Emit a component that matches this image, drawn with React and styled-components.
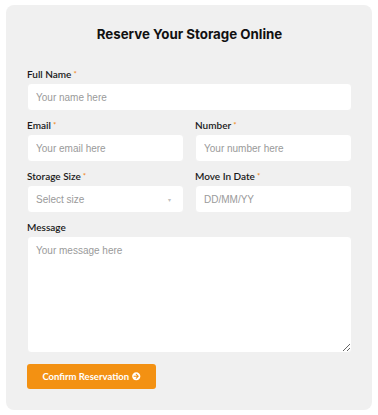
import React from 'react';
import styled, { createGlobalStyle } from 'styled-components';
import { FaArrowCircleRight } from 'react-icons/fa';

const GlobalStyle = createGlobalStyle`
  body {
    margin: 0;
    background: #ffffff;
    font-family: "Lato", "Liberation Sans", sans-serif;
  }
`;

const Page = styled.div`
  padding: 5px 6px 5px 6px;
`;

const Card = styled.form`
  background: #f0f0f0;
  border-radius: 8px;
  padding: 21px 20px 21px 21px;
  display: flex;
  flex-direction: column;
  gap: 8px;
`;

const Title = styled.h2`
  margin: 0 0 17px;
  text-align: center;
  font-family: "Inter", "Liberation Sans", sans-serif;
  font-size: 13.3px;
  font-weight: 700;
  line-height: 17px;
  color: #111;
`;

const Row = styled.div`
  display: grid;
  grid-template-columns: 1fr 1fr;
  gap: 11px;
`;

const Field = styled.div`
  display: flex;
  flex-direction: column;
  gap: 3px;
`;

const Label = styled.label`
  font-size: 10px;
  font-weight: 600;
  line-height: 12px;
  color: #1a1a1a;

  span {
    color: #f08a24;
    font-size: 8px;
    vertical-align: top;
    margin-left: 2px;
  }
`;

const inputBase = `
  box-sizing: border-box;
  width: 100%;
  border: 1px solid #f0f0f0;
  border-radius: 4px;
  background: #fff;
  font-family: "Liberation Sans", Arial, sans-serif;
  font-size: 10px;
  color: #333;
  padding: 0 8px;
  outline: none;

  &::placeholder {
    color: #9a9a9a;
  }
`;

const Input = styled.input`
  ${inputBase}
  height: 28px;
`;

const SelectBox = styled.div`
  ${inputBase}
  height: 28px;
  display: flex;
  align-items: center;
  justify-content: space-between;
  color: #9a9a9a;

  i {
    font-style: normal;
    font-size: 6px;
    color: #c0c0c0;
    margin-right: 4px;
  }
`;

const TextArea = styled.textarea`
  ${inputBase}
  height: 117px;
  padding: 8px;
  resize: vertical;
  display: block;
`;

const Button = styled.button`
  align-self: flex-start;
  margin-top: 3px;
  width: 129px;
  height: 25px;
  border: none;
  border-radius: 3px;
  background: #f39112;
  color: #fff;
  font-family: "Lato", "Liberation Sans", sans-serif;
  font-size: 9.5px;
  font-weight: 700;
  display: flex;
  align-items: center;
  justify-content: center;
  gap: 3px;

  svg {
    font-size: 8.5px;
  }
`;

const Req = () => <span>*</span>;

export default function App() {
  return (
    <Page>
      <GlobalStyle />
      <Card onSubmit={e => e.preventDefault()}>
        <Title>Reserve Your Storage Online</Title>
        <Field>
          <Label>Full Name<Req /></Label>
          <Input placeholder="Your name here" />
        </Field>
        <Row>
          <Field>
            <Label>Email<Req /></Label>
            <Input placeholder="Your email here" />
          </Field>
          <Field>
            <Label>Number<Req /></Label>
            <Input placeholder="Your number here" />
          </Field>
        </Row>
        <Row>
          <Field>
            <Label>Storage Size<Req /></Label>
            <SelectBox>Select size<i>▾</i></SelectBox>
          </Field>
          <Field>
            <Label>Move In Date<Req /></Label>
            <Input placeholder="DD/MM/YY" />
          </Field>
        </Row>
        <Field>
          <Label>Message</Label>
          <TextArea placeholder="Your message here" />
        </Field>
        <Button type="submit">
          Confirm Reservation <FaArrowCircleRight />
        </Button>
      </Card>
    </Page>
  );
}
